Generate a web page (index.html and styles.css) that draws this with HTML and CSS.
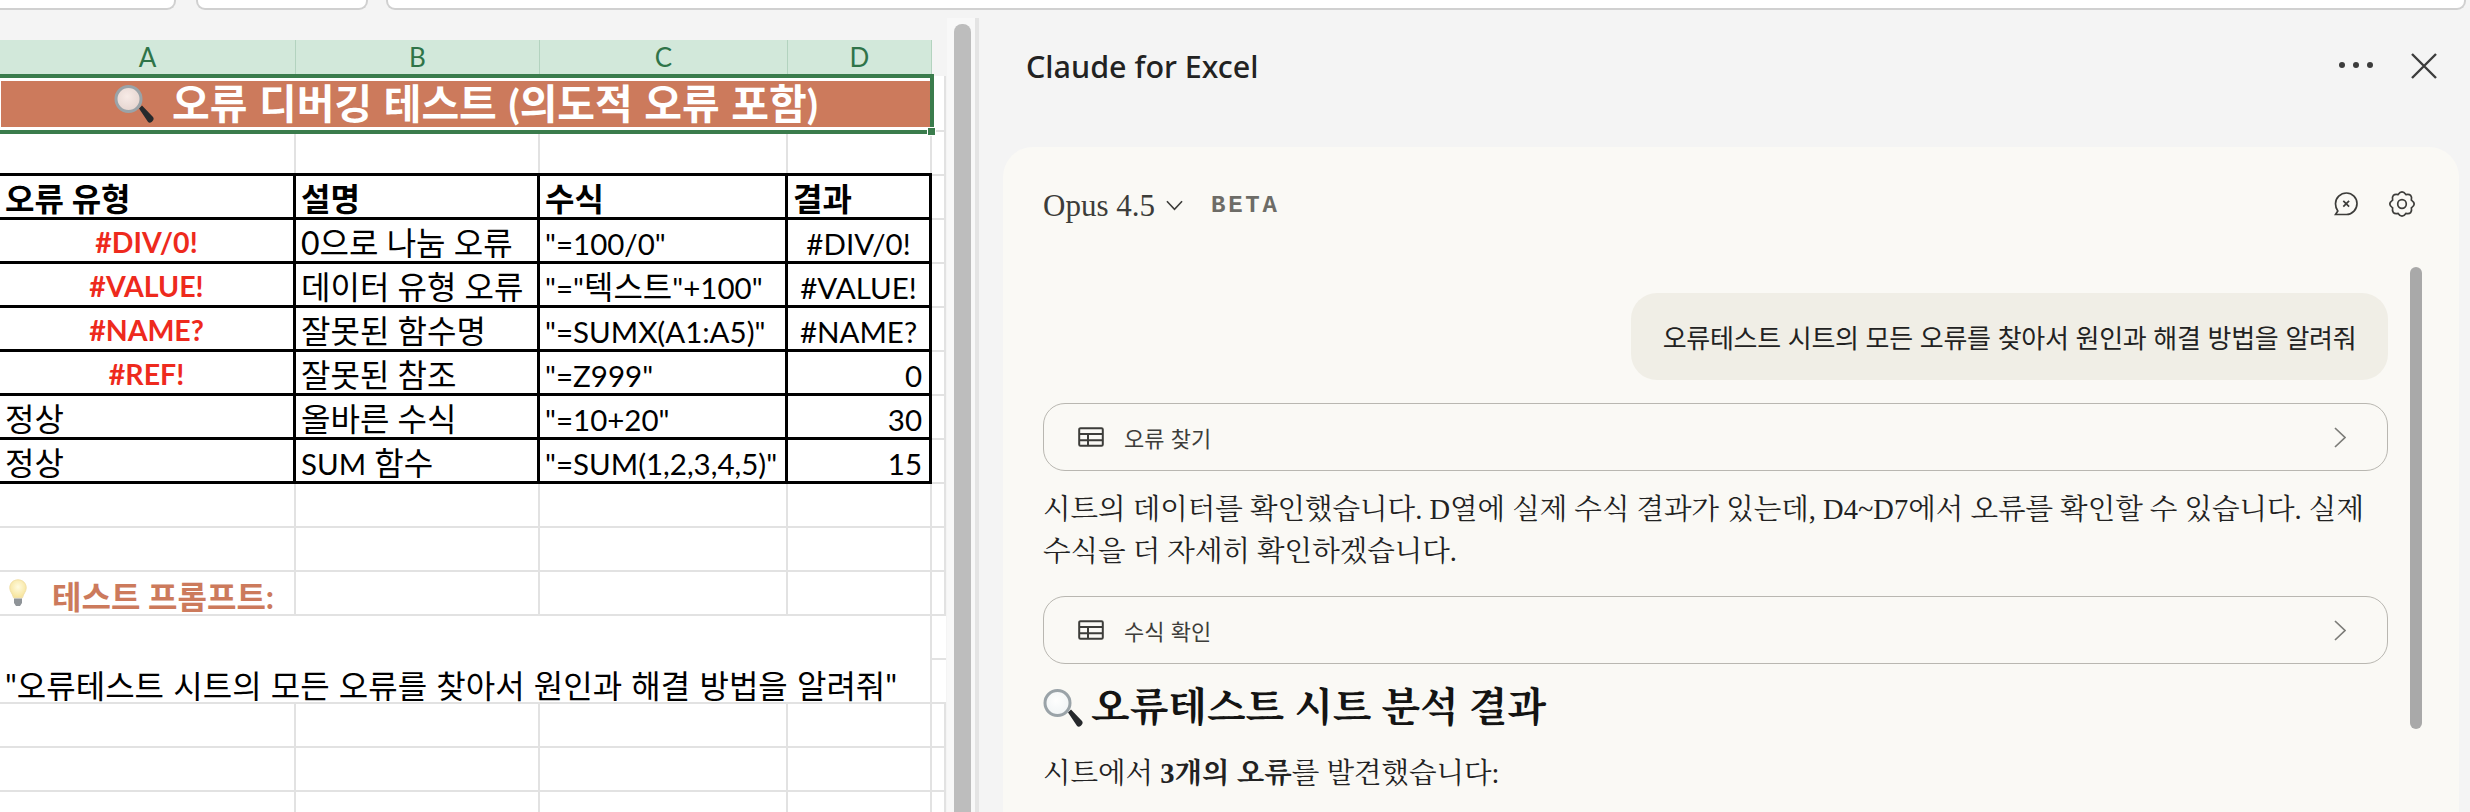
FILE: index.html
```html
<!DOCTYPE html>
<html lang="ko">
<head>
<meta charset="utf-8">
<title>Claude for Excel</title>
<link rel="stylesheet" href="styles.css">
</head>
<body>
<svg class="defs" width="0" height="0">
  <defs>
    <radialGradient id="glass" cx="45%" cy="40%" r="60%">
      <stop offset="0" stop-color="#fff" stop-opacity=".85"/>
      <stop offset="1" stop-color="#eef3f6" stop-opacity=".75"/>
    </radialGradient>
    <radialGradient id="bulb" cx="50%" cy="40%" r="60%">
      <stop offset="0" stop-color="#fffbe0"/>
      <stop offset="1" stop-color="#f7e49a"/>
    </radialGradient>
    <symbol id="mag" viewBox="0 0 40 38">
      <path d="M25 23.5l3-3 11 11.5c1 1.2.8 2.8-.4 4l-1 .9c-1.1 1-2.7 1-3.7-.1z" fill="#26292c"/>
      <circle cx="14.5" cy="14" r="12.5" fill="url(#glass)" stroke="#9aa3a8" stroke-width="3"/>
    </symbol>
    <symbol id="tbl" viewBox="0 0 26 20">
      <path d="M2.5 1.2h21a1.3 1.3 0 0 1 1.3 1.3v15a1.3 1.3 0 0 1-1.3 1.3h-21a1.3 1.3 0 0 1-1.3-1.3v-15a1.3 1.3 0 0 1 1.3-1.3zM1.2 7h23.6M1.2 13.2h23.6M10 7v12" fill="none" stroke="#3d3d3a" stroke-width="2"/>
    </symbol>
    <symbol id="chev" viewBox="0 0 12 21">
      <path d="M1 1l10 9.5L1 20" fill="none" stroke="#7c7c78" stroke-width="1.7"/>
    </symbol>
  </defs>
</svg>

<div class="topbar">
  <div class="chip chip-a"></div>
  <div class="chip chip-b"></div>
  <div class="chip chip-c"></div>
</div>

<div class="main">
  <section class="left">
    <div class="sheet">
      <div class="colhead">A</div><div class="colhead">B</div><div class="colhead">C</div><div class="colhead">D</div><div class="colhead blank"></div>

      <div class="cell title span4"><svg class="title-mag"><use href="#mag"/></svg><span>오류 디버깅 테스트 (의도적 오류 포함)</span></div><div class="cell"></div>

      <div class="cell"></div><div class="cell"></div><div class="cell"></div><div class="cell"></div><div class="cell"></div>

      <div class="cell t bold top-t">오류 유형</div><div class="cell t bold top-t">설명</div><div class="cell t bold top-t">수식</div><div class="cell t bold top-t">결과</div><div class="cell"></div>

      <div class="cell t err">#DIV/0!</div><div class="cell t">0으로 나눔 오류</div><div class="cell t"><span class="lat">"=100/0"</span></div><div class="cell t mid"><span class="lat">#DIV/0!</span></div><div class="cell"></div>
      <div class="cell t err">#VALUE!</div><div class="cell t">데이터 유형 오류</div><div class="cell t"><span class="lat">"="</span>텍스트<span class="lat">"+100"</span></div><div class="cell t mid"><span class="lat">#VALUE!</span></div><div class="cell"></div>
      <div class="cell t err">#NAME?</div><div class="cell t">잘못된 함수명</div><div class="cell t"><span class="lat">"=SUMX(A1:A5)"</span></div><div class="cell t mid"><span class="lat">#NAME?</span></div><div class="cell"></div>
      <div class="cell t err">#REF!</div><div class="cell t">잘못된 참조</div><div class="cell t"><span class="lat">"=Z999"</span></div><div class="cell t num"><span class="lat">0</span></div><div class="cell"></div>
      <div class="cell t">정상</div><div class="cell t">올바른 수식</div><div class="cell t"><span class="lat">"=10+20"</span></div><div class="cell t num"><span class="lat">30</span></div><div class="cell"></div>
      <div class="cell t">정상</div><div class="cell t"><span class="lat">SUM</span> 함수</div><div class="cell t"><span class="lat">"=SUM(1,2,3,4,5)"</span></div><div class="cell t num"><span class="lat">15</span></div><div class="cell"></div>

      <div class="cell"></div><div class="cell"></div><div class="cell"></div><div class="cell"></div><div class="cell"></div>
      <div class="cell"></div><div class="cell"></div><div class="cell"></div><div class="cell"></div><div class="cell"></div>

      <div class="cell prompt">
        <svg class="bulb" viewBox="0 0 18 28"><path d="M9 .8c4.8 0 8.2 3.5 8.2 8 0 4-3 5.8-3.7 10h-9C3.8 14.6.8 12.8.8 8.8.8 4.3 4.2.8 9 .8z" fill="url(#bulb)" stroke="#f1dfa6"/><path d="M5 19.5h8V24l-2 3H7l-2-3z" fill="#8f9498"/></svg>
        <span>테스트 프롬프트:</span>
      </div><div class="cell"></div><div class="cell"></div><div class="cell"></div><div class="cell"></div>

      <div class="cell quote span4">"오류테스트 시트의 모든 오류를 찾아서 원인과 해결 방법을 알려줘"</div><div class="cell tall-e"><span class="e-line"></span></div>

      <div class="cell"></div><div class="cell"></div><div class="cell"></div><div class="cell"></div><div class="cell"></div>
      <div class="cell"></div><div class="cell"></div><div class="cell"></div><div class="cell"></div><div class="cell"></div>
      <div class="cell"></div><div class="cell"></div><div class="cell"></div><div class="cell"></div><div class="cell"></div>

      <div class="selection"><i class="handle"></i></div>
    </div>
  </section>

  <div class="vscroll"><div class="vthumb"></div></div>
  <div class="splitter"></div>

  <aside class="panel">
    <header class="panel-head">
      <h1>Claude for Excel</h1>
      <div class="head-actions">
        <svg class="dots" viewBox="0 0 34 6"><circle cx="3" cy="3" r="3"/><circle cx="17" cy="3" r="3"/><circle cx="31" cy="3" r="3"/></svg>
        <svg class="close" viewBox="0 0 26 26"><path d="M1 1l24 24M25 1L1 25"/></svg>
      </div>
    </header>

    <div class="card">
      <div class="card-head">
        <span class="model">Opus 4.5</span>
        <svg class="model-chev" viewBox="0 0 18 11"><path d="M1 1l8 8.5L17 1"/></svg>
        <span class="beta">BETA</span>
        <span class="spacer"></span>
        <svg class="chat-x" viewBox="0 0 24 24"><path d="M12.5 1C18.3 1 23 5.8 23 11.5S18.5 22.5 12.5 22.5H1.5L3.8 19C2.3 17 1.5 14.5 1.5 11.8 1.5 5.9 6.5 1 12.5 1z"/><path d="M9.3 8.8l5.8 5.8M15.1 8.8l-5.8 5.8"/></svg>
        <svg class="gear" viewBox="0 0 26 26"><path d="M22.4 9.1Q28 13 22.4 16.9Q23.6 23.6 16.9 22.4Q13 28 9.1 22.4Q2.4 23.6 3.6 16.9Q-2 13 3.6 9.1Q2.4 2.4 9.1 3.6Q13-2 16.9 3.6Q23.6 2.4 22.4 9.1Z"/><circle cx="13" cy="13" r="4.3"/></svg>
      </div>

      <div class="thread">
        <div class="bubble">오류테스트 시트의 모든 오류를 찾아서 원인과 해결 방법을 알려줘</div>

        <div class="tool">
          <svg class="tool-icon"><use href="#tbl"/></svg>
          <span class="tool-label">오류 찾기</span>
          <svg class="tool-chev"><use href="#chev"/></svg>
        </div>

        <p class="para">시트의 데이터를 확인했습니다. D열에 실제 수식 결과가 있는데, D4~D7에서 오류를 확인할 수 있습니다. 실제 수식을 더 자세히 확인하겠습니다.</p>

        <div class="tool tool-2">
          <svg class="tool-icon"><use href="#tbl"/></svg>
          <span class="tool-label">수식 확인</span>
          <svg class="tool-chev"><use href="#chev"/></svg>
        </div>

        <h2 class="result"><svg class="result-mag"><use href="#mag"/></svg><span>오류테스트 시트 분석 결과</span></h2>
        <p class="para para-last">시트에서 <strong>3개의 오류</strong>를 발견했습니다:</p>

        <div class="card-scroll"></div>
      </div>
    </div>
  </aside>
</div>
</body>
</html>
```

FILE: styles.css
```css
* { box-sizing: border-box; }
html, body { margin: 0; padding: 0; }
body {
  width: 2470px;
  height: 812px;
  overflow: hidden;
  background: #f4f4f4;
  font-family: "Lato", "Noto Sans CJK KR", sans-serif;
  color: #000;
}
.defs { position: absolute; }

/* Ribbon remainder */
.topbar { display: flex; height: 10px; gap: 18px; padding-right: 4px; }
.chip {
  height: 10px;
  background: #fff;
  border: 2px solid #d0d0d0;
  border-top: 0;
  border-radius: 0 0 9px 9px;
}
.chip-a { width: 176px; margin-right: 2px; border-left: 0; border-radius: 0 0 9px 0; }
.chip-b { width: 172px; }
.chip-c { flex: 1; }

.main { display: flex; padding-top: 8px; height: 802px; }

/* Spreadsheet */
.left { width: 946px; padding-top: 22px; overflow: hidden; }
.sheet {
  position: relative;
  display: grid;
  grid-template-columns: 296px 244px 248px 144px 14px;
  grid-template-rows: 36px 56px repeat(16, 44px);
  background: #fff;
}
.colhead {
  background: #d2e8da;
  color: #2f7448;
  border-right: 1px solid #b3d3bf;
  font-size: 26px;
  line-height: 35px;
  text-align: center;
}
.colhead.blank { background: #f4f4f4; border: 0; }
.cell {
  border-right: 2px solid #e2e2e2;
  border-bottom: 2px solid #e2e2e2;
  min-width: 0;
  white-space: nowrap;
}
.span4 { grid-column: span 4; }
.t {
  border-right: 3px solid #000;
  border-bottom: 3px solid #000;
  font-size: 32px;
  line-height: 45px;
  padding-left: 5px;
}
.lat { font-size: 29.5px; }
.bold { font-weight: 700; }
.top-t { box-shadow: 0 -3px 0 #000; }
.err { color: #ee2a1d; font-size: 28.5px; font-weight: 700; text-align: center; padding-left: 0; }
.mid { text-align: center; padding-left: 0; }
.num { text-align: right; padding: 0 7px 0 0; }
.title {
  display: flex;
  align-items: center;
  justify-content: center;
  gap: 18px;
  height: 48px;
  margin: 4px 0;
  background: #cc7a5c;
  color: #fff;
  font-size: 41px;
  line-height: 50px;
  word-spacing: 1.6px;
  font-weight: 700;
  border: 0;
  outline: 2px solid #fff;
  outline-offset: -1px;
}
.title-mag { width: 40px; height: 38px; flex: none; }
.prompt {
  display: flex;
  align-items: center;
  gap: 25px;
  padding: 3px 0 0 9px;
  color: #cc7a5c;
  font-size: 32px;
  font-weight: 700;
  overflow: visible;
}
.bulb { width: 18px; height: 28px; flex: none; margin-top: -4px; }
.quote {
  grid-row: span 2;
  display: flex;
  align-items: flex-end;
  padding: 0 0 0 5px;
  font-size: 32px;
  line-height: 32px;
  word-spacing: 1px;
  border-right: 0;
}
.tall-e { grid-row: span 2; position: relative; border-right: 0; border-left: 2px solid #e2e2e2; margin-left: -2px; }
.e-line { display: block; height: 44px; border-bottom: 2px solid #e2e2e2; }
.selection {
  position: absolute;
  left: -6px;
  top: 34px;
  width: 940px;
  height: 60px;
  border: 4px solid #3a7c4c;
  pointer-events: none;
}
.handle {
  position: absolute;
  right: -6px;
  bottom: -6px;
  width: 9px;
  height: 9px;
  background: #3a7c4c;
  border: 1px solid #fff;
}

/* Sheet scrollbar */
.vscroll { width: 28px; margin-left: 1px; background: #f8f8f8; padding: 6px 4px 0 7px; }
.vthumb { height: 100%; background: #bdbdbd; border-radius: 8px 8px 0 0; }
.splitter { width: 4px; background: #e4e4e4; }

/* Claude panel */
.panel { flex: 1; padding: 0 11px 0 24px; min-width: 0; }
.panel-head {
  display: flex;
  align-items: center;
  justify-content: space-between;
  height: 96px;
  margin-bottom: 33px;
  padding: 0 22px 0 23px;
}
.panel-head h1 {
  margin: 0;
  font: 500 30.5px/1 "Noto Sans", sans-serif;
  color: #222;
}
.head-actions { display: flex; align-items: center; gap: 38px; }
.dots { width: 34px; height: 6px; fill: #3c3c3c; margin-top: -3px; }
.close { width: 26px; height: 26px; fill: none; stroke: #3c3c3c; stroke-width: 2.4; }
.card {
  position: relative;
  height: 665px;
  background: #faf9f5;
  border-radius: 30px 30px 0 0;
  padding: 0 71px 0 40px;
}
.card-head {
  display: flex;
  align-items: center;
  height: 117px;
  margin-right: -27px;
}
.model { font: 31px/1 "Liberation Serif", serif; color: #3d3d3a; }
.model-chev { width: 17px; height: 11px; margin-left: 11px; fill: none; stroke: #3d3d3a; stroke-width: 1.7; }
.beta { margin-left: 28px; font: 700 24px/1 "Liberation Mono", monospace; letter-spacing: 2.8px; color: #6d6c67; }
.spacer { flex: 1; }
.chat-x { width: 24px; height: 24px; margin-top: -4px; fill: none; stroke: #3d3d3a; stroke-width: 1.7; }
.gear { width: 26px; height: 26px; margin: -4px 0 0 31px; fill: none; stroke: #3d3d3a; stroke-width: 1.7; overflow: visible; }
.thread { position: relative; height: 548px; padding-top: 29px; font-family: "Liberation Serif", "Noto Serif CJK KR", "Noto Sans CJK KR", serif; }
.bubble {
  width: 757px;
  height: 87px;
  margin: 0 0 0 auto;
  background: #f0eee6;
  border-radius: 26px;
  font: 26px/87px "Noto Sans CJK KR", sans-serif;
  color: #222;
  text-align: center;
  letter-spacing: -.3px;
}
.tool {
  display: flex;
  align-items: center;
  height: 68px;
  margin-top: 23px;
  padding: 0 41px 0 34px;
  border: 1.5px solid #b9b7b1;
  border-radius: 22px;
}
.tool-icon { width: 26px; height: 20px; flex: none; }
.tool-label { margin-left: 20px; font: 22px/1 "Noto Sans CJK KR", sans-serif; color: #3d3d3a; flex: 1; }
.tool-chev { width: 12px; height: 21px; flex: none; }
.para { margin: 18px 0 0; font-size: 28.5px; line-height: 42px; color: #222; }
.tool-2 { margin-top: 23px; }
.result {
  display: flex;
  align-items: center;
  gap: 8px;
  margin: 22px 0 0;
  font-size: 40px;
  line-height: 44px;
  font-weight: 700;
  color: #141413;
}
.result-mag { width: 40px; height: 38px; flex: none; }
.para-last { margin-top: 23px; }
.card-scroll {
  position: absolute;
  top: 3px;
  right: -34px;
  width: 12px;
  height: 462px;
  background: #a9a9a9;
  border-radius: 6px;
}
```
